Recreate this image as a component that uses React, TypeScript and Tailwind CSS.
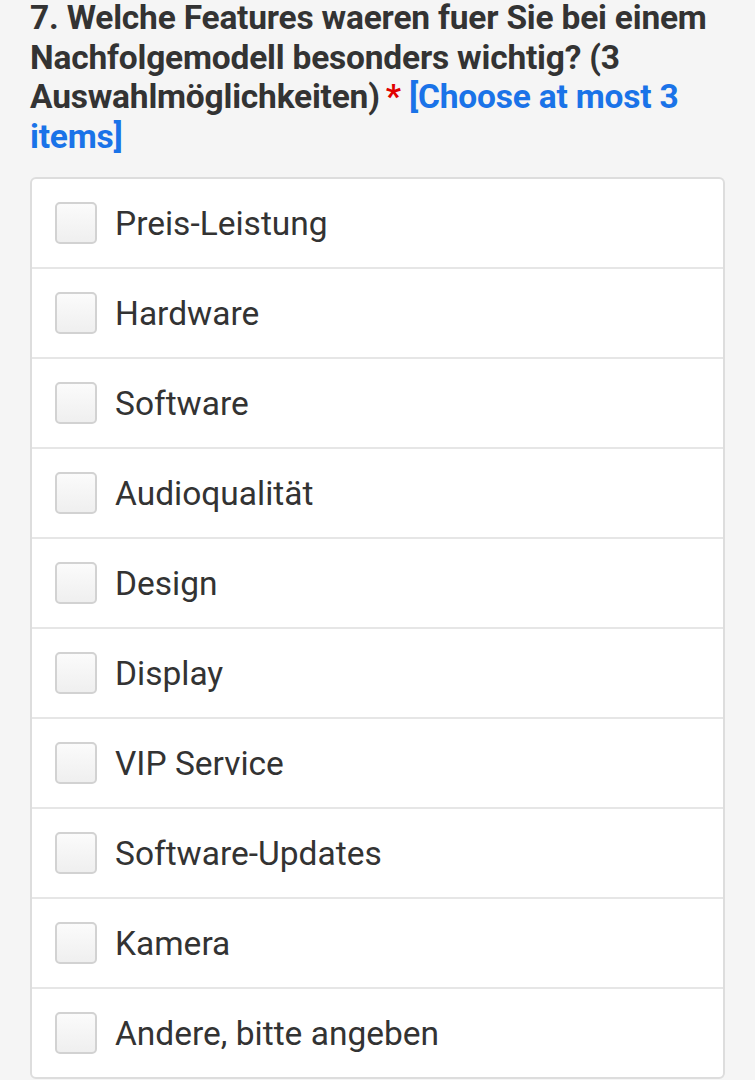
import React from 'react';

const items = [
  'Preis-Leistung',
  'Hardware',
  'Software',
  'Audioqualität',
  'Design',
  'Display',
  'VIP Service',
  'Software-Updates',
  'Kamera',
  'Andere, bitte angeben',
];

export default function App() {
  return (
    <div className="w-[755px] h-[1080px] overflow-hidden bg-[#f5f5f5] font-['Roboto',sans-serif]">
      {/* question */}
      <div className="px-[30px] mt-[-2px]">
        <h2 className="text-[33.5px] leading-[39.5px] font-bold text-[#333333] tracking-[-0.2px]">
          7. Welche Features waeren fuer Sie bei einem Nachfolgemodell besonders wichtig? (3 Auswahlmöglichkeiten)
          <span className="ml-[6px] text-[#e00000]">*</span>{' '}
          <span className="text-[#1a73e8]">[Choose at most 3 items]</span>
        </h2>
      </div>

      {/* options box */}
      <div className="mx-[30px] mt-[21px] w-[695px] bg-white border-2 border-[#dddddd] rounded-[6px]">
        {items.map((item, i) => (
          <div
            key={item}
            className={'flex items-center pl-[23px] ' + (i > 0 ? 'h-[90px] border-t-2 border-[#e6e6e6]' : 'h-[88px]')}
          >
            <div className="w-[42px] h-[42px] rounded-[5px] border-2 border-[#d2d2d2] bg-gradient-to-b from-[#fbfbfb] to-[#efefef]" />
            <span className="ml-[18px] pt-[3px] text-[33.5px] text-[#333333]">{item}</span>
          </div>
        ))}
      </div>
    </div>
  );
}
